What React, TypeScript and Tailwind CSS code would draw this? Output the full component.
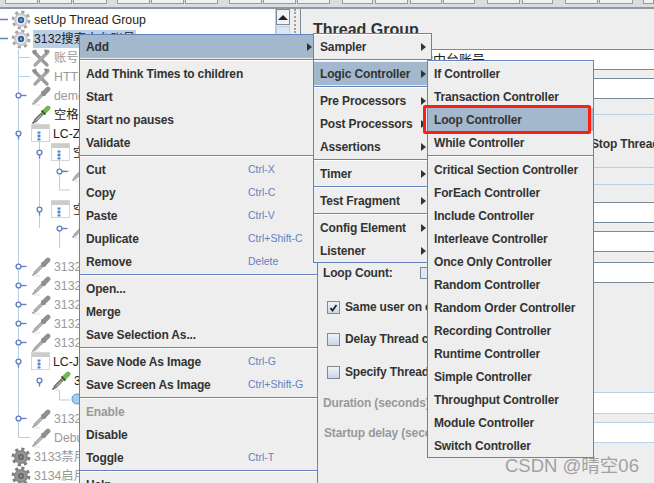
import type { ReactNode } from "react";

const FONT = "font-['Liberation_Sans','Noto_Sans_CJK_SC',sans-serif]";

type IconKind = "gear" | "gearOff" | "tools" | "dropper" | "dropperOn" | "window" | "glass" | "pencil";

type TreeRow = { level: 0 | 1 | 2 | 3; icon?: IconKind; label?: string; muted?: boolean; selected?: boolean };

const TREE: TreeRow[] = [
  { level: 0, icon: "gear", label: "setUp Thread Group" },
  { level: 0, icon: "gear", label: "3132搜索中台账号", selected: true },
  { level: 1, icon: "tools", label: "账号密码配置", muted: true },
  { level: 1, icon: "tools", label: "HTTP Header", muted: true },
  { level: 1, icon: "dropper", label: "demo", muted: true },
  { level: 1, icon: "dropperOn", label: "空格搜索" },
  { level: 1, icon: "window", label: "LC-Z" },
  { level: 2, icon: "window", label: "空格" },
  { level: 3, icon: "pencil", label: "" },
  { level: 3 },
  { level: 2, icon: "window", label: "空格" },
  { level: 3, icon: "pencil", label: "" },
  { level: 3 },
  { level: 1, icon: "dropper", label: "3132", muted: true },
  { level: 1, icon: "dropper", label: "3132", muted: true },
  { level: 1, icon: "dropper", label: "3132", muted: true },
  { level: 1, icon: "dropper", label: "3132", muted: true },
  { level: 1, icon: "dropper", label: "3132", muted: true },
  { level: 1, icon: "window", label: "LC-J" },
  { level: 2, icon: "dropperOn", label: "3132" },
  { level: 3, icon: "glass" },
  { level: 1, icon: "dropper", label: "3132", muted: true },
  { level: 1, icon: "dropper", label: "Debug", muted: true },
  { level: 0, icon: "gearOff", label: "3133禁用", muted: true },
  { level: 0, icon: "gearOff", label: "3134启用", muted: true },
];

const LEVEL_PAD = { 0: "pl-[11px]", 1: "pl-[31px]", 2: "pl-[51px]", 3: "pl-[71px]" };

// toolbar cell groups, [left, right] in px
const TOOLBAR = [
  [5, 38], [39, 72], [73, 107], [117, 150], [151, 184], [185, 218], [229, 262], [263, 296], [297, 330],
  [342, 373], [375, 408], [410, 442], [443, 475], [487, 520], [522, 553], [565, 598], [599, 633], [643, 654],
];

type MenuItem = { label: string; key?: string; arrow?: boolean; active?: boolean; off?: boolean } | "sep";

const MAIN_MENU: MenuItem[] = [
  { label: "Add", arrow: true, active: true },
  "sep",
  { label: "Add Think Times to children" },
  { label: "Start" },
  { label: "Start no pauses" },
  { label: "Validate" },
  "sep",
  { label: "Cut", key: "Ctrl-X" },
  { label: "Copy", key: "Ctrl-C" },
  { label: "Paste", key: "Ctrl-V" },
  { label: "Duplicate", key: "Ctrl+Shift-C" },
  { label: "Remove", key: "Delete" },
  "sep",
  { label: "Open..." },
  { label: "Merge" },
  { label: "Save Selection As..." },
  "sep",
  { label: "Save Node As Image", key: "Ctrl-G" },
  { label: "Save Screen As Image", key: "Ctrl+Shift-G" },
  "sep",
  { label: "Enable", off: true },
  { label: "Disable" },
  { label: "Toggle", key: "Ctrl-T" },
  "sep",
  { label: "Help" },
];

const ADD_MENU: MenuItem[] = [
  { label: "Sampler", arrow: true },
  "sep",
  { label: "Logic Controller", arrow: true, active: true },
  "sep",
  { label: "Pre Processors", arrow: true },
  { label: "Post Processors", arrow: true },
  { label: "Assertions", arrow: true },
  "sep",
  { label: "Timer", arrow: true },
  "sep",
  { label: "Test Fragment", arrow: true },
  "sep",
  { label: "Config Element", arrow: true },
  { label: "Listener", arrow: true },
];

const LOGIC_MENU: MenuItem[] = [
  { label: "If Controller" },
  { label: "Transaction Controller" },
  { label: "Loop Controller", active: true },
  { label: "While Controller" },
  "sep",
  { label: "Critical Section Controller" },
  { label: "ForEach Controller" },
  { label: "Include Controller" },
  { label: "Interleave Controller" },
  { label: "Once Only Controller" },
  { label: "Random Controller" },
  { label: "Random Order Controller" },
  { label: "Recording Controller" },
  { label: "Runtime Controller" },
  { label: "Simple Controller" },
  { label: "Throughput Controller" },
  { label: "Module Controller" },
  { label: "Switch Controller" },
];

function TreeIcon({ kind }: { kind: IconKind }) {
  if (kind === "gear" || kind === "gearOff") {
    const off = kind === "gearOff";
    return (
      <svg width="20" height="20" viewBox="0 0 20 20" className="shrink-0">
        <circle cx="10" cy="10" r="7.6" fill="none" stroke={off ? "#7d7d7d" : "#a4a4a4"} strokeWidth="3.6" strokeDasharray="3 2.97" />
        <circle cx="10" cy="10" r="7" fill={off ? "#8a8a8a" : "#c9c9c9"} />
        <circle cx="10" cy="10" r="4.8" fill={off ? "#9a9a9a" : "#eeeeee"} />
        <circle cx="10" cy="10" r="3.2" fill={off ? "#6e6e6e" : "#33619f"} />
        <circle cx="10" cy="10" r="1.2" fill={off ? "#8e8e8e" : "#86a9d6"} />
      </svg>
    );
  }
  if (kind === "tools") {
    return (
      <svg width="20" height="20" viewBox="0 0 20 20" className="shrink-0">
        <path d="M3 4 L16 17" stroke="#9a9a9a" strokeWidth="3.4" strokeLinecap="round" />
        <path d="M17 4 L4 17" stroke="#a6a6a6" strokeWidth="3.4" strokeLinecap="round" />
        <path d="M13 1.5 L18.5 2 L14.5 7 Z" fill="#8c8c8c" />
        <path d="M1 3 L5 1.5 L6.5 6 L3 6.5 Z" fill="#8c8c8c" />
      </svg>
    );
  }
  if (kind === "dropper" || kind === "dropperOn" || kind === "pencil") {
    const on = kind === "dropperOn";
    return (
      <svg width="20" height="20" viewBox="0 0 20 20" className="shrink-0">
        <path d="M12.5 7.5 L3.5 16.5" stroke={on ? "#6e6e6e" : "#a8a8a8"} strokeWidth="3.2" />
        <path d="M3.5 16.5 L1.5 18.5" stroke={on ? "#444444" : "#888888"} strokeWidth="1.4" />
        <path d="M3 19 H9" stroke="#dddddd" strokeWidth="1" />
        <path d="M10.5 10 L5 15.5" stroke={on ? "#f2f2f2" : "#c4c4c4"} strokeWidth="0.9" />
        <path d="M12.5 7.5 L17 3" stroke={on ? "#74b653" : "#909090"} strokeWidth="4.8" strokeLinecap="round" />
        <path d="M10.5 5.5 L14.5 9.5" stroke={on ? "#3e3e3e" : "#8a8a8a"} strokeWidth="1.6" />
      </svg>
    );
  }
  if (kind === "glass") {
    return (
      <svg width="20" height="20" viewBox="0 0 20 20" className="shrink-0">
        <circle cx="6" cy="9" r="5" fill="#9fd0f0" stroke="#5f93bd" />
      </svg>
    );
  }
  return (
    <svg width="19" height="19" viewBox="0 0 19 19" className="shrink-0">
      <rect x="0.5" y="0.5" width="18" height="17" fill="#ffffff" stroke="#d6d6d6" />
      <rect x="1" y="1" width="17" height="4" fill="#cccccc" />
      <rect x="6.5" y="7.5" width="3" height="2" fill="#4a8ad4" />
      <rect x="6.5" y="11" width="3" height="2" fill="#4a8ad4" />
      <rect x="6.5" y="14.5" width="3" height="2" fill="#4a8ad4" />
      <path d="M8 9.5 V14.5" stroke="#4a8ad4" strokeWidth="1" />
    </svg>
  );
}

// connector lines and expand handles behind the tree rows, y is relative to the tree panel top
function TreeLines() {
  const rowY = (i: number) => 10.5 + i * 19;
  const handle = (x: number, i: number, down: boolean) => (
    <g key={`${x}-${i}`}>
      <path d={down ? `M${x} ${rowY(i)} V${rowY(i) + 6}` : `M${x} ${rowY(i)} H${x + 8}`} stroke="#6382bf" strokeWidth="1.4" />
      <circle cx={x} cy={rowY(i)} r="2.4" fill="#ffffff" stroke="#6382bf" strokeWidth="1.4" />
    </g>
  );
  return (
    <svg width="120" height="474" className="absolute left-0 top-0">
      <g stroke="#b8cfe5" fill="none">
        <path d="M18.5 40 V428.5 H30" />
        <path d="M39.5 133 V219 M59.5 152 V181 M59.5 219 V239" />
        <path d="M18.5 48.5 H30 M18.5 67.5 H30 M59.5 162 H70 M59.5 181 H70" />
        <path d="M59.5 381 V391 H70" />
      </g>
      <path d="M0 10.5 H8 M0 29.5 H8" stroke="#6382bf" strokeWidth="1.4" />
      {[4, 13, 14, 15, 16, 17, 21].map((i) => handle(18.5, i, false))}
      {[6, 18].map((i) => handle(18.5, i, true))}
      {[7, 10].map((i) => handle(39.5, i, true))}
      {handle(39.5, 19, true)}
      {[8, 11].map((i) => handle(59.5, i, false))}
    </svg>
  );
}

function Tree() {
  return (
    <div className="relative w-[275px] shrink-0 bg-white pt-px overflow-hidden">
      <TreeLines />
      {TREE.map((row, i) => (
        <div key={i} className={`relative flex h-[19px] items-center gap-[2px] ${LEVEL_PAD[row.level]}`}>
          {row.icon && <TreeIcon kind={row.icon} />}
          {row.label && (
            <span
              className={`whitespace-nowrap px-px text-[12.3px] leading-[18px] ${row.muted ? "text-[#999999]" : "text-[#222222]"} ${row.selected ? "bg-[#b8cfe5]" : ""}`}
            >
              {row.label}
            </span>
          )}
        </div>
      ))}
    </div>
  );
}

function Menu({ items, className, keyColumn = 0 }: { items: MenuItem[]; className: string; keyColumn?: number }) {
  return (
    <div className={`absolute border border-[#6382bf] bg-white ${className}`}>
      {items.map((item, i) => {
        if (item === "sep") {
          return (
            <div key={i} className="h-[4px] bg-[#eeeeee] pt-px">
              <div className="h-px bg-[#6382bf]" />
              <div className="h-px bg-white" />
            </div>
          );
        }
        return (
          <div
            key={i}
            className={`relative flex h-[23px] items-center whitespace-nowrap pl-[6px] text-[12px] font-bold tracking-[-0.15px] ${item.active ? "bg-[#a3b8cc]" : "bg-[#eeeeee]"} ${item.off ? "text-[#999999]" : "text-[#333333]"}`}
          >
            <span>{item.label}</span>
            {item.key && (
              <span
                className="absolute text-[10.5px] font-normal tracking-normal text-[#6382bf]"
                style={{ left: keyColumn }}
              >
                {item.key}
              </span>
            )}
            {item.arrow && (
              <span className="ml-auto mr-[5px] h-0 w-0 border-y-[4px] border-l-[5px] border-y-transparent border-l-[#333333]" />
            )}
          </div>
        );
      })}
    </div>
  );
}

function Field({ children, className = "" }: { children?: ReactNode; className?: string }) {
  return (
    <div className={`h-[21px] overflow-hidden border-y border-[#7a8a99] bg-white text-[13px] leading-[19px] text-[#222222] ${className}`}>
      {children}
    </div>
  );
}

function Check({ checked, label }: { checked?: boolean; label: string }) {
  return (
    <div className="flex h-[14px] items-center gap-[5px] pl-[26px] text-[12px] font-bold tracking-[-0.15px] text-[#333333]">
      <span className="relative h-[13px] w-[13px] shrink-0 border border-[#7a8a99] bg-gradient-to-b from-[#eef3f8] to-[#c8d8e8]">
        {checked && (
          <svg width="11" height="11" viewBox="0 0 11 11" className="absolute left-0 top-0">
            <path d="M2.5 6 L4.5 8.5 L8.5 3" fill="none" stroke="#222222" strokeWidth="1.8" />
          </svg>
        )}
      </span>
      <span className="whitespace-nowrap">{label}</span>
    </div>
  );
}

function RightPane() {
  return (
    <div className="flex-1 min-w-0 overflow-hidden border-l border-[#7a8a99] bg-[#eeeeee]">
      <div className="h-[40px] pl-[12px] pt-[10px] text-[16px] font-bold leading-[22px] text-[#333333]">Thread Group</div>
      <Field className="ml-[74px] pl-[3px]">3132搜索中台账号</Field>
      <Field className="ml-[74px] mt-[8px]" />
      <div className="mt-[15px] h-px bg-[#b8cfe5]" />
      <div className="mt-[21px] h-[16px] pl-[290px] text-[12px] font-bold leading-[16px] tracking-[-0.15px] text-[#333333] whitespace-nowrap">
        Stop Thread
      </div>
      <div className="mt-[15px] h-px bg-[#b8cfe5]" />
      <div className="mt-[16px] h-px bg-[#b8cfe5]" />
      <Field className="ml-[140px] mt-[17px]" />
      <Field className="ml-[140px] mt-[8px]" />
      <div className="mt-[10px] flex h-[21px] items-center">
        <span className="w-[119px] shrink-0 pl-[22px] text-[12px] font-bold tracking-[-0.15px] text-[#333333]">Loop Count:</span>
        <span className="h-[12px] w-[13px] shrink-0 border border-[#7a8a99] bg-[#dfe8f0]" />
        <Field className="flex-1 ml-[8px]" />
      </div>
      <div className="mt-[17px]">
        <Check checked label="Same user on each iteration" />
      </div>
      <div className="mt-[18px]">
        <Check label="Delay Thread creation" />
      </div>
      <div className="mt-[19px]">
        <Check label="Specify Thread lifetime" />
      </div>
      <div className="mt-[13px] flex h-[22px] items-center">
        <span className="w-[140px] shrink-0 pl-[22px] text-[12px] font-bold tracking-[-0.15px] text-[#999999] whitespace-nowrap">Duration (seconds):</span>
        <div className="h-full flex-1 border-y border-[#b8cfe5] bg-white" />
      </div>
      <div className="mt-[8px] flex h-[21px] items-center">
        <span className="w-[140px] shrink-0 pl-[23px] text-[12px] font-bold tracking-[-0.15px] text-[#999999] whitespace-nowrap">Startup delay (seconds):</span>
        <div className="h-full flex-1 border-y border-[#b8cfe5] bg-white" />
      </div>
    </div>
  );
}

export default function App() {
  return (
    <div className={`relative h-[483px] w-[654px] overflow-hidden bg-[#eeeeee] ${FONT}`}>
      {/* toolbar strip, only its bottom edge is in view */}
      <div className="relative h-[9px] border-b-2 border-[#8c98a4] bg-[#dcdcdc]">
        {TOOLBAR.map(([l, r]) => (
          <div
            key={l}
            className="absolute top-0 h-[4px] border border-t-0 border-[#9a9a9a] bg-[#f0f0f0]"
            style={{ left: l, width: r - l }}
          />
        ))}
      </div>

      <div className="flex h-[474px]">
        <Tree />
        <div className="w-[15px] shrink-0 border-l border-[#c8c8c8] bg-[#eeeeee]">
          <div className="flex h-[16px] items-center justify-center border border-[#7a8a99] bg-[#f2f2f2]">
            <span className="h-0 w-0 border-x-[5px] border-b-[5px] border-x-transparent border-b-[#222222]" />
          </div>
          <div className="mt-px h-full border border-[#b8cfe5] bg-[#dde6ee]" />
        </div>
        <div className="w-[10px] shrink-0 pl-[4px]">
          <div className="h-[24px] w-[3px] border-l-2 border-dotted border-[#a0a0a0]" />
        </div>
        <RightPane />
      </div>

      <Menu items={MAIN_MENU} keyColumn={168} className="left-[79px] top-[34px] w-[239px]" />
      <Menu items={ADD_MENU} className="left-[313px] top-[33px] w-[119px] pt-px" />
      <Menu items={LOGIC_MENU} className="left-[427px] top-[60px] w-[167px] pt-px" />

      <div className="absolute left-[423px] top-[105px] h-[29px] w-[168px] rounded-[2px] border-[3px] border-[#fb1e14]" />

      <div className="absolute left-[505px] top-[454px] whitespace-nowrap text-[18.5px] leading-[24px] text-[#8f8f8f] opacity-80">
        CSDN @晴空06
      </div>
    </div>
  );
}
